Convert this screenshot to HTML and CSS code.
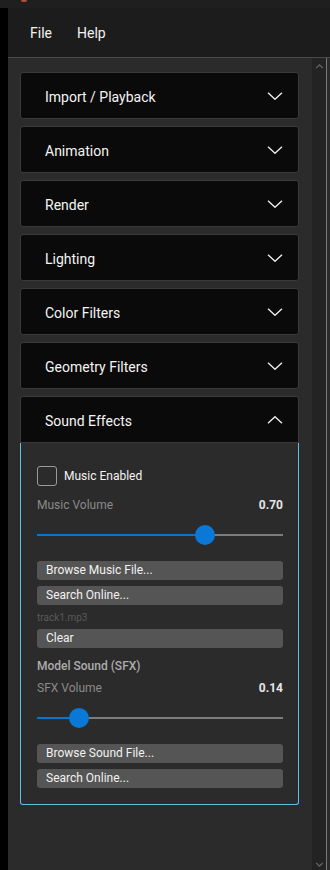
FILE: index.html
```html
<!DOCTYPE html>
<html lang="en">
<head>
    <meta charset="UTF-8">
    <meta name="viewport" content="width=device-width, initial-scale=1.0">
    <title>Settings</title>
    <link rel="stylesheet" href="styles.css">
</head>
<body>
    <div class="titlebar"><span class="app-dot"></span></div>

    <div class="window">
        <div class="edge"></div>
        <div class="main">
            <nav class="menubar">
                <span class="menu-item">File</span>
                <span class="menu-item">Help</span>
            </nav>

            <div class="content">
                <div class="panel">
                    <div class="section">
                        <div class="section-header">Import / Playback
                            <svg class="chevron" viewBox="0 0 16 8"><path d="M1 0.7 L8 7.3 L15 0.7"/></svg>
                        </div>
                    </div>
                    <div class="section">
                        <div class="section-header">Animation
                            <svg class="chevron" viewBox="0 0 16 8"><path d="M1 0.7 L8 7.3 L15 0.7"/></svg>
                        </div>
                    </div>
                    <div class="section">
                        <div class="section-header">Render
                            <svg class="chevron" viewBox="0 0 16 8"><path d="M1 0.7 L8 7.3 L15 0.7"/></svg>
                        </div>
                    </div>
                    <div class="section">
                        <div class="section-header">Lighting
                            <svg class="chevron" viewBox="0 0 16 8"><path d="M1 0.7 L8 7.3 L15 0.7"/></svg>
                        </div>
                    </div>
                    <div class="section">
                        <div class="section-header">Color Filters
                            <svg class="chevron" viewBox="0 0 16 8"><path d="M1 0.7 L8 7.3 L15 0.7"/></svg>
                        </div>
                    </div>
                    <div class="section">
                        <div class="section-header">Geometry Filters
                            <svg class="chevron" viewBox="0 0 16 8"><path d="M1 0.7 L8 7.3 L15 0.7"/></svg>
                        </div>
                    </div>
                    <div class="section open">
                        <div class="section-header">Sound Effects
                            <svg class="chevron" viewBox="0 0 16 8"><path d="M1 7.3 L8 0.7 L15 7.3"/></svg>
                        </div>
                        <div class="section-body">
                            <label class="check-row">
                                <span class="checkbox"></span>
                                Music Enabled
                            </label>

                            <div class="value-row first">
                                <span class="value-label">Music Volume</span>
                                <span class="value">0.70</span>
                            </div>
                            <div class="slider">
                                <div class="track"></div>
                                <div class="fill" style="width: calc(0.70 * (100% - 20px) + 10px)"></div>
                                <div class="thumb" style="left: calc(0.70 * (100% - 20px))"></div>
                            </div>

                            <button class="btn btn-first">Browse Music File...</button>
                            <button class="btn">Search Online...</button>
                            <div class="file-name">track1.mp3</div>
                            <button class="btn btn-clear">Clear</button>

                            <div class="group-title">Model Sound (SFX)</div>
                            <div class="value-row">
                                <span class="value-label">SFX Volume</span>
                                <span class="value">0.14</span>
                            </div>
                            <div class="slider">
                                <div class="track"></div>
                                <div class="fill" style="width: calc(0.14 * (100% - 20px) + 10px)"></div>
                                <div class="thumb" style="left: calc(0.14 * (100% - 20px))"></div>
                            </div>

                            <button class="btn btn-first">Browse Sound File...</button>
                            <button class="btn">Search Online...</button>
                        </div>
                    </div>
                </div>

                <div class="scrollbar">
                    <svg class="scroll-arrow" viewBox="0 0 10 6"><path d="M1 5 L5 1 L9 5"/></svg>
                    <svg class="scroll-arrow" viewBox="0 0 10 6"><path d="M1 1 L5 5 L9 1"/></svg>
                </div>
                <div class="frame-line"></div>
            </div>
        </div>
    </div>
</body>
</html>
```

FILE: styles.css
```css
html, body {
    height: 100%;
}
body {
    margin: 0;
    font-family: Roboto, "Open Sans", Arial, sans-serif;
    background-color: #1e1e1e;
    color: #fff;
    display: flex;
    flex-direction: column;
    overflow: hidden;
}
.titlebar {
    height: 8px;
    background-color: #1f1f1f;
    flex-shrink: 0;
}
.app-dot {
    display: block;
    width: 6px;
    height: 2px;
    margin-left: 21px;
    background-color: #b0503a;
    border-radius: 0 0 3px 3px;
}
.window {
    flex: 1;
    display: flex;
    min-height: 0;
}
.edge {
    width: 8px;
    background-color: #000;
}
.main {
    flex: 1;
    display: flex;
    flex-direction: column;
    min-width: 0;
}
.menubar {
    height: 49px;
    background-color: #1c1c1c;
    border-bottom: 1px solid #4a4a4a;
    display: flex;
    align-items: center;
    gap: 25px;
    padding-left: 22px;
    flex-shrink: 0;
}
.menu-item {
    font-size: 14px;
    color: #f2f2f2;
}
.content {
    flex: 1;
    display: flex;
    min-height: 0;
    background-color: #2b2b2b;
}
.panel {
    flex: 1;
    padding: 14px 13px 0 12px;
    display: flex;
    flex-direction: column;
    gap: 7px;
}
.section-header {
    box-sizing: border-box;
    height: 47px;
    padding: 2px 15px 0 24px;
    background-color: #0a0a0a;
    border: 1px solid #3a3a3a;
    border-radius: 3px;
    display: flex;
    align-items: center;
    justify-content: space-between;
    font-size: 14px;
    color: #f4f4f4;
}
.chevron {
    width: 16px;
    height: 8px;
    margin-top: -2px;
    fill: none;
    stroke: #f0f0f0;
    stroke-width: 1.3;
}
.section.open .section-header {
    border-radius: 3px 3px 0 0;
}
.section-body {
    border: 1px solid #5cc3dc;
    border-top: none;
    border-radius: 0 0 3px 3px;
    padding: 23px 15px 16px 16px;
    display: flex;
    flex-direction: column;
}
.check-row {
    height: 20px;
    display: flex;
    align-items: center;
    gap: 7px;
    font-size: 12px;
    color: #f4f4f4;
}
.checkbox {
    width: 18px;
    height: 18px;
    border: 1px solid #9a9a9a;
    border-radius: 3px;
}
.value-row {
    height: 16px;
    margin-top: 6px;
    display: flex;
    align-items: center;
    justify-content: space-between;
    font-size: 12px;
}
.value-row.first {
    margin-top: 11px;
}
.value-label {
    color: #8a8a8a;
}
.value {
    color: #e6e6e6;
    font-weight: 700;
}
.slider {
    position: relative;
    height: 20px;
    margin-top: 12px;
}
.track {
    position: absolute;
    left: 0;
    right: 0;
    top: 9px;
    height: 2px;
    background-color: #7c7c7c;
}
.fill {
    position: absolute;
    left: 0;
    top: 9px;
    height: 2px;
    background-color: #0a74cc;
}
.thumb {
    position: absolute;
    top: 0;
    width: 20px;
    height: 20px;
    border-radius: 50%;
    background-color: #0a78d7;
}
.btn {
    height: 19px;
    margin-top: 6px;
    padding: 0 0 0 9px;
    border: none;
    border-radius: 3px;
    background-color: #555;
    color: #f2f2f2;
    font-family: inherit;
    font-size: 12px;
    text-align: left;
    line-height: 19px;
}
.btn-first {
    margin-top: 16px;
}
.btn-clear {
    margin-top: 4px;
}
.file-name {
    height: 14px;
    margin-top: 6px;
    font-size: 10px;
    line-height: 14px;
    color: #5a5a5a;
}
.group-title {
    height: 16px;
    margin-top: 10px;
    font-size: 12px;
    font-weight: 500;
    line-height: 16px;
    color: #adadad;
}
.scrollbar {
    width: 14px;
    background-color: #232323;
    display: flex;
    flex-direction: column;
    justify-content: space-between;
    align-items: center;
    padding: 6px 0 3px;
}
.scroll-arrow {
    width: 9px;
    height: 5px;
    fill: none;
    stroke: #6a6a6a;
    stroke-width: 1.3;
}
.frame-line {
    width: 1px;
    background-color: #7a7a7a;
    margin-right: 3px;
}
```
